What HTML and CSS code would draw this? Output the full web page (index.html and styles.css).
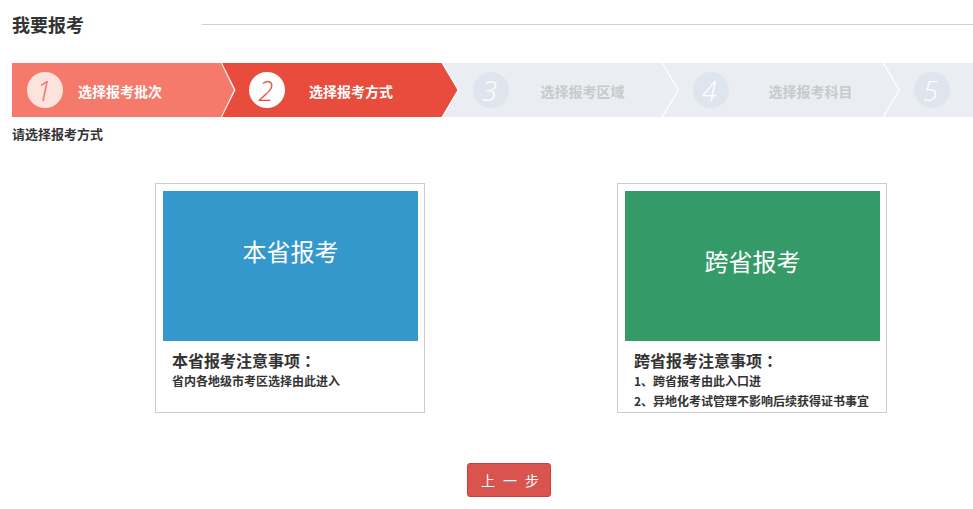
FILE: index.html
```html
<!DOCTYPE html>
<html lang="zh-CN">
<head>
<meta charset="utf-8">
<title>我要报考</title>
<link rel="stylesheet" href="styles.css">
</head>
<body>
<div class="page">
  <div class="title-row">
    <h1 class="title">我要报考</h1>
    <div class="title-line"></div>
  </div>

  <div class="steps">
    <div class="step step-1 done">
      <span class="num">1</span>
      <span class="label">选择报考批次</span>
    </div>
    <div class="step step-2 active">
      <span class="num">2</span>
      <span class="label">选择报考方式</span>
    </div>
    <div class="step step-3">
      <span class="num">3</span>
      <span class="label">选择报考区域</span>
    </div>
    <div class="step step-4">
      <span class="num">4</span>
      <span class="label">选择报考科目</span>
    </div>
    <div class="step step-5">
      <span class="num">5</span>
    </div>
  </div>

  <p class="hint">请选择报考方式</p>

  <div class="cards">
    <div class="card">
      <div class="card-img blue">本省报考</div>
      <div class="card-body">
        <h3 class="card-title">本省报考注意事项<span class="colon">：</span></h3>
        <p class="card-text">省内各地级市考区选择由此进入</p>
      </div>
    </div>
    <div class="card">
      <div class="card-img green">跨省报考</div>
      <div class="card-body">
        <h3 class="card-title">跨省报考注意事项<span class="colon">：</span></h3>
        <p class="card-text">1、跨省报考由此入口进</p>
        <p class="card-text">2、异地化考试管理不影响后续获得证书事宜</p>
      </div>
    </div>
  </div>

  <div class="actions">
    <button class="btn-prev" type="button">上一步</button>
  </div>
</div>
</body>
</html>
```

FILE: styles.css
```css
* { box-sizing: border-box; }

html, body {
  margin: 0;
  padding: 0;
  background: #fff;
}

body {
  font-family: "Noto Sans CJK SC", "Noto Sans", "Liberation Sans", sans-serif;
  color: #333;
  overflow: hidden;
}

.page {
  padding-left: 12px;
  width: 973px;
}

.title-row {
  display: flex;
  align-items: center;
  height: 48px;
}

.title {
  margin: 0;
  width: 190px;
  flex: none;
  font-size: 18px;
  line-height: 24px;
  font-weight: bold;
  color: #333;
}

.title-line {
  flex: 1;
  height: 1px;
  background: #cfcfcf;
}

.steps {
  display: flex;
  height: 54px;
  margin-top: 15px;
  overflow: hidden;
}

.step {
  display: flex;
  align-items: center;
  height: 54px;
  flex: none;
  background: #eaedf2;
  color: #c9c9c9;
  clip-path: polygon(0 0, calc(100% - 16px) 0, 100% 50%, calc(100% - 16px) 100%, 0 100%, 16px 50%);
  margin-left: -14.5px;
  width: 235.5px;
  padding-left: 29.5px;
}

.step-1 {
  margin-left: 0;
  width: 222px;
  padding-left: 15px;
  clip-path: polygon(0 0, calc(100% - 13px) 0, 100% 50%, calc(100% - 13px) 100%, 0 100%);
}

.step-2 {
  margin-left: -12px;
  padding-left: 27px;
  clip-path: polygon(0 0, calc(100% - 16px) 0, 100% 50%, calc(100% - 16px) 100%, 0 100%, 13.5px 50%);
}

.step-3 { width: 234.5px; }

.step-5 {
  flex: 1;
  width: auto;
  clip-path: polygon(0 0, 100% 0, 100% 100%, 0 100%, 16px 50%);
}

.num {
  width: 36px;
  height: 36px;
  border-radius: 50%;
  flex: none;
  display: flex;
  align-items: center;
  justify-content: center;
  font-family: "Open Sans", "Liberation Sans", sans-serif;
  font-style: italic;
  font-weight: 300;
  font-size: 27px;
  line-height: 1;
  background: #dfe5ee;
  color: #fff;
  padding-right: 2px;
}

.label {
  font-size: 14px;
  font-weight: bold;
  white-space: nowrap;
  line-height: 20px;
  padding-top: 1px;
}

.step-1 .label { margin-left: 15px; }
.step-2 .label { margin-left: 24px; }
.step-3 .label { margin-left: 32px; }
.step-4 .label { margin-left: 40px; }

.done {
  background: #f57a6c;
  color: #fff;
}
.done .num {
  background: #fde2de;
  color: #f26c5e;
}

.active {
  background: #e74c3c;
  color: #fff;
}
.active .num {
  background: #fff;
  color: #e74c3c;
}

.hint {
  margin: 7px 0 0;
  font-size: 13px;
  line-height: 20px;
  font-weight: bold;
  color: #333;
}

.cards {
  display: flex;
  gap: 192px;
  margin-top: 39px;
  padding-left: 143px;
}

.card {
  width: 270px;
  height: 230px;
  border: 1px solid #cccccc;
  padding: 7px 6px 0 7px;
  overflow: hidden;
}

.card-img {
  height: 150px;
  color: #fff;
  font-size: 24px;
  line-height: 30px;
  text-align: center;
}

.blue {
  background: #3498cd;
  padding-top: 45px;
}

.green {
  background: #349a68;
  padding-top: 55px;
}

.card-body {
  padding: 8px 0 0 9px;
}

.card-title {
  margin: 0;
  font-size: 16px;
  line-height: 22px;
  font-weight: bold;
  color: #333;
}

.colon {
  margin-left: 4px;
}

.card-text {
  margin: 0;
  font-size: 12px;
  line-height: 20px;
  font-weight: bold;
  color: #333;
  white-space: nowrap;
}

.actions {
  margin-top: 50px;
  padding-left: 455px;
}

.btn-prev {
  width: 84px;
  height: 34px;
  border: 1px solid #c9403b;
  border-radius: 3px;
  background: #d9534f;
  color: #fff;
  font-family: "Noto Sans CJK SC", sans-serif;
  font-size: 14px;
  letter-spacing: 8px;
  text-align: left;
  padding: 0 0 0 13px;
  line-height: 32px;
}
```
